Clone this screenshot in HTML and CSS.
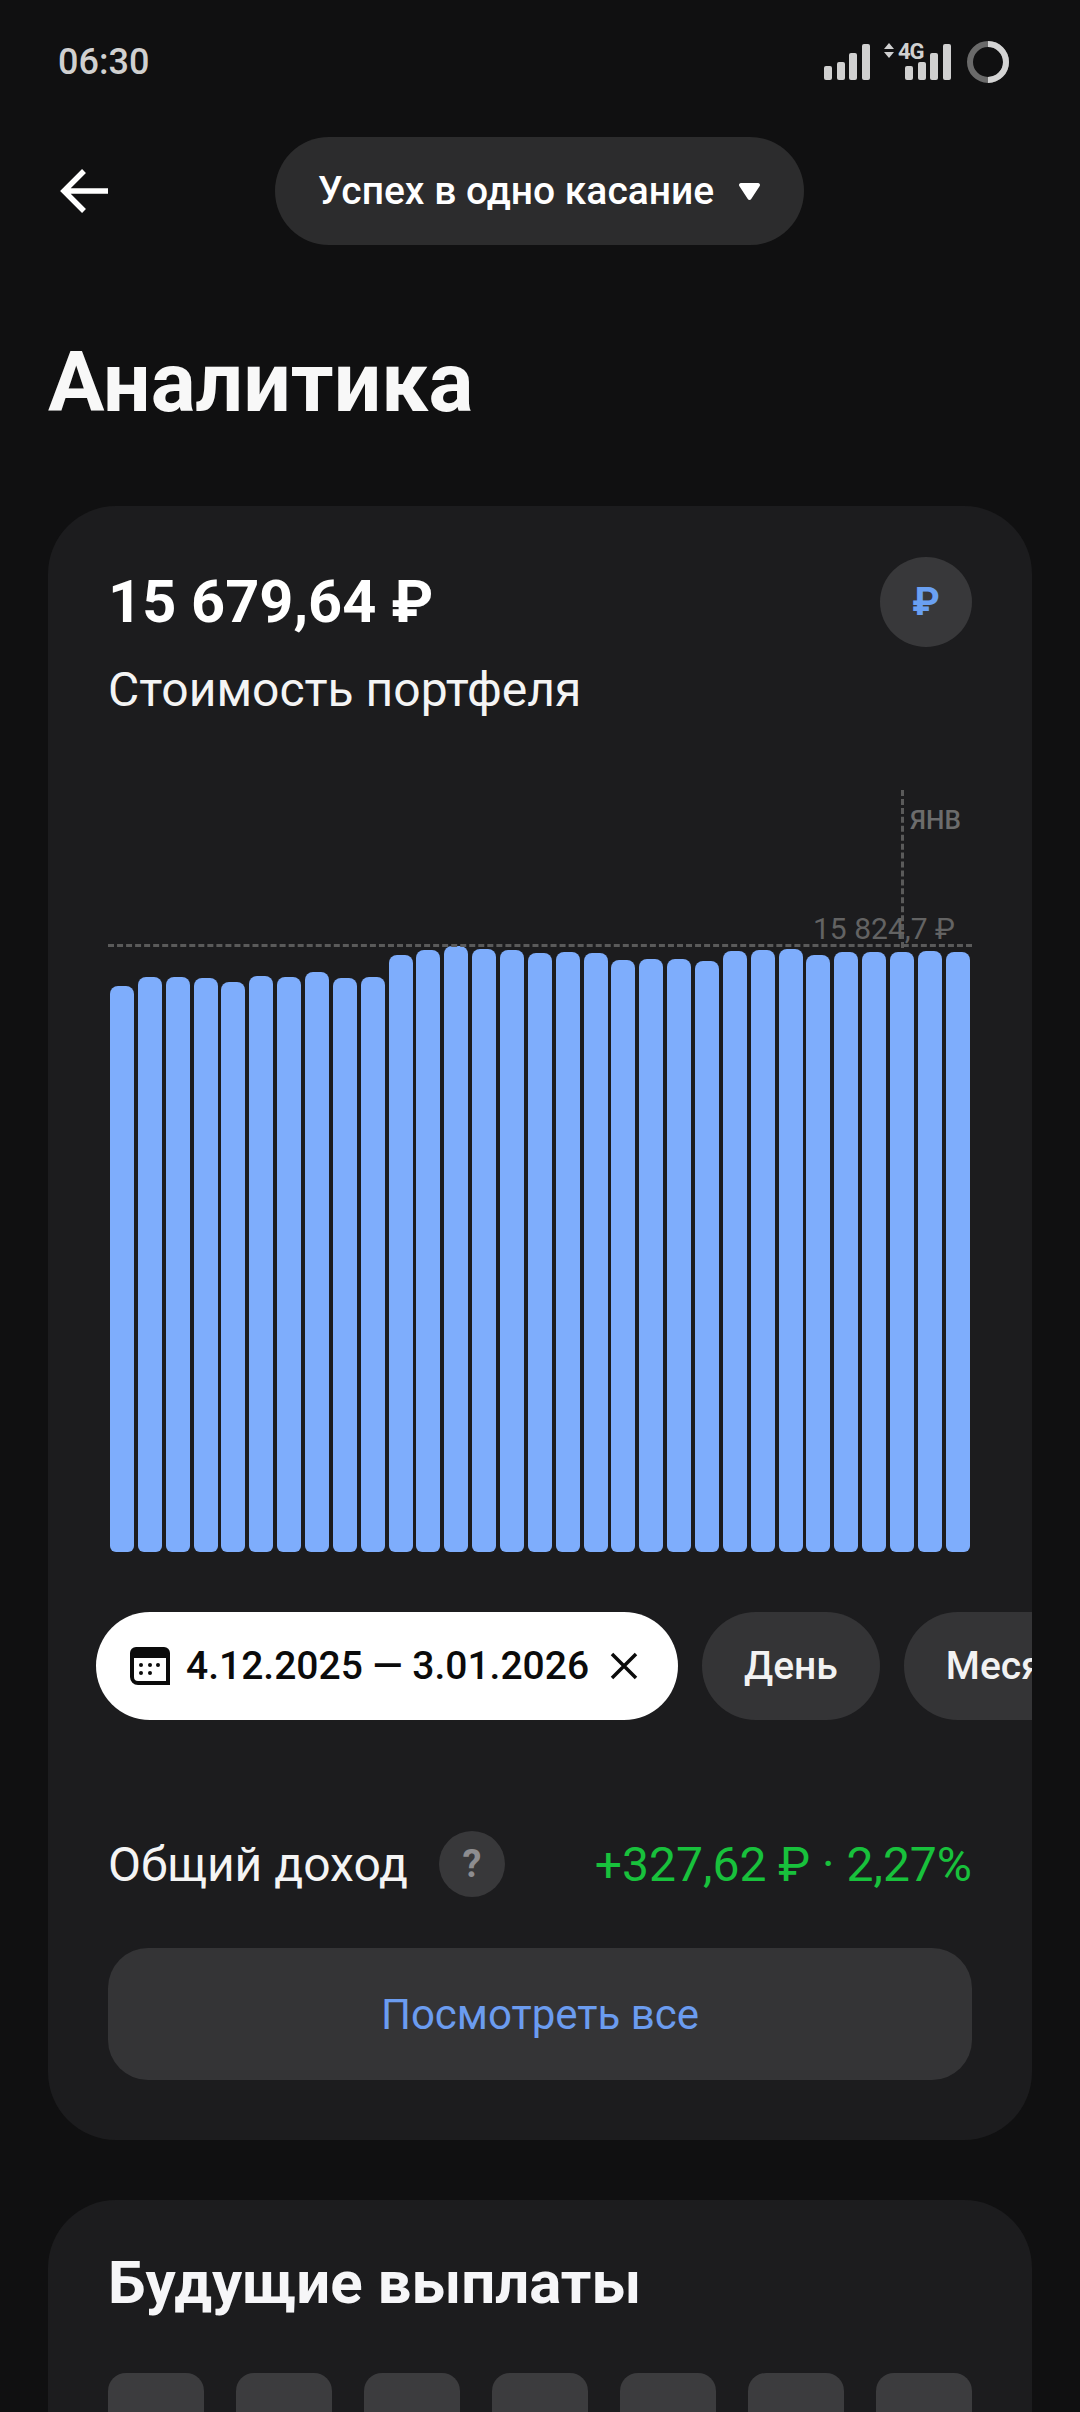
FILE: index.html
```html
<!DOCTYPE html>
<html lang="ru">
<head>
  <meta charset="UTF-8" />
  <title>Аналитика</title>
  <link rel="stylesheet" href="styles.css">
</head>
<body>
  <div class="status-bar">
    <span class="status-time">06:30</span>
    <svg class="status-icons" width="190" height="48" viewBox="824 38 190 48">
      <g fill="#d0d0d0">
        <rect x="824" y="66" width="8" height="14" rx="2"/>
        <rect x="837" y="62" width="8" height="18" rx="2"/>
        <rect x="849" y="53" width="8" height="27" rx="2"/>
        <rect x="862" y="44" width="8" height="36" rx="2"/>
        <path d="M889 43l5 6h-10zM889 58l5-6h-10z"/>
        <text x="898" y="59" class="status-4g">4G</text>
        <rect x="905" y="66" width="8" height="14" rx="2"/>
        <rect x="918" y="62" width="8" height="18" rx="2"/>
        <rect x="930" y="53" width="8" height="27" rx="2"/>
        <rect x="943" y="44" width="8" height="36" rx="2"/>
      </g>
      <circle cx="988" cy="62" r="18" fill="none" stroke="#6a6a6a" stroke-width="6"/>
      <path d="M988 44a18 18 0 0 1 0 36" fill="none" stroke="#d4d4d4" stroke-width="6"/>
    </svg>
  </div>

  <div class="nav">
    <svg class="back" width="52" height="48" viewBox="0 0 52 48">
      <path d="M49 24H6M25 4L5 24l20 20" fill="none" stroke="#fff" stroke-width="5.500"/>
    </svg>
    <div class="account-pill">
      <span>Успех в одно касание</span>
      <svg width="21" height="17" viewBox="0 0 21 17"><path d="M2 0h17a2 2 0 0 1 1.700 3l-8.500 13a2 2 0 0 1-3.400 0L.3 3A2 2 0 0 1 2 0z" fill="#fff"/></svg>
    </div>
  </div>

  <h1 class="page-title">Аналитика</h1>

  <section class="card">
    <div class="summary">
      <div>
        <div class="summary-value">15 679,64 ₽</div>
        <div class="summary-label">Стоимость портфеля</div>
      </div>
      <div class="currency-badge">₽</div>
    </div>

    <div class="chart">
      <div class="chart-month-line"></div>
      <span class="chart-month">ЯНВ</span>
      <span class="chart-max">15 824,7 ₽</span>
      <div class="chart-max-line"></div>
      <div class="bars">
        <div class="bar" style="height:566px"></div>
        <div class="bar" style="height:575px"></div>
        <div class="bar" style="height:575px"></div>
        <div class="bar" style="height:574px"></div>
        <div class="bar" style="height:570px"></div>
        <div class="bar" style="height:576px"></div>
        <div class="bar" style="height:575px"></div>
        <div class="bar" style="height:580px"></div>
        <div class="bar" style="height:574px"></div>
        <div class="bar" style="height:575px"></div>
        <div class="bar" style="height:597px"></div>
        <div class="bar" style="height:602px"></div>
        <div class="bar" style="height:606px"></div>
        <div class="bar" style="height:603px"></div>
        <div class="bar" style="height:602px"></div>
        <div class="bar" style="height:599px"></div>
        <div class="bar" style="height:600px"></div>
        <div class="bar" style="height:599px"></div>
        <div class="bar" style="height:592px"></div>
        <div class="bar" style="height:593px"></div>
        <div class="bar" style="height:593px"></div>
        <div class="bar" style="height:591px"></div>
        <div class="bar" style="height:601px"></div>
        <div class="bar" style="height:602px"></div>
        <div class="bar" style="height:603px"></div>
        <div class="bar" style="height:597px"></div>
        <div class="bar" style="height:600px"></div>
        <div class="bar" style="height:600px"></div>
        <div class="bar" style="height:600px"></div>
        <div class="bar" style="height:601px"></div>
        <div class="bar" style="height:600px"></div>
      </div>
    </div>

    <div class="chips">
      <div class="chip chip-active">
        <svg width="40" height="38" viewBox="0 0 40 38">
          <path d="M6 0h28a6 6 0 0 1 6 6v32H8a8 8 0 0 1-8-8V6a6 6 0 0 1 6-6zM4 11v19a4 4 0 0 0 4 4h28V11z" fill="#0b0b0b" fill-rule="evenodd"/>
          <circle cx="11" cy="18" r="2" fill="#0b0b0b"/>
          <circle cx="20" cy="18" r="2" fill="#0b0b0b"/>
          <circle cx="28" cy="18" r="2" fill="#0b0b0b"/>
          <circle cx="11" cy="26" r="2" fill="#0b0b0b"/>
          <circle cx="20" cy="26" r="2" fill="#0b0b0b"/>
        </svg>
        <span class="chip-date">4.12.2025 — 3.01.2026</span>
        <svg class="chip-close" width="28" height="28" viewBox="0 0 28 28">
          <path d="M2 2l24 24M26 2L2 26" fill="none" stroke="#0b0b0b" stroke-width="3.500"/>
        </svg>
      </div>
      <div class="chip">День</div>
      <div class="chip">Месяц</div>
    </div>

    <div class="income">
      <span class="income-label">Общий доход</span>
      <span class="help-badge">?</span>
      <span class="income-value">+327,62 ₽ · 2,27%</span>
    </div>

    <div class="show-all">Посмотреть все</div>
  </section>

  <section class="card card-payouts">
    <h2 class="card-title">Будущие выплаты</h2>
    <div class="skeletons">
      <div class="skeleton"></div>
      <div class="skeleton"></div>
      <div class="skeleton"></div>
      <div class="skeleton"></div>
      <div class="skeleton"></div>
      <div class="skeleton"></div>
      <div class="skeleton"></div>
    </div>
  </section>
</body>
</html>
```

FILE: styles.css
```css
html, body {
  margin: 0;
  padding: 0;
  height: 2412px;
  overflow: hidden;
  background-color: #101011;
  color: #fff;
  font-family: Roboto, "Noto Sans", sans-serif;
}
.status-bar {
  height: 124px;
  display: flex;
  align-items: center;
  justify-content: space-between;
  padding: 0 66px 0 58px;
  box-sizing: border-box;
}
.status-time {
  font-size: 36px;
  font-weight: 500;
  color: #d0d0d0;
}
.status-icons {
  display: block;
}
.status-4g {
  font-size: 22px;
  font-weight: 700;
  letter-spacing: -1px;
}
.nav {
  margin-top: 13px;
  height: 108px;
  display: flex;
  align-items: center;
  padding-left: 59px;
}
.back {
  flex: none;
}
.account-pill {
  margin-left: 164px;
  width: 529px;
  height: 108px;
  box-sizing: border-box;
  padding: 0 44px 0 43px;
  border-radius: 54px;
  background-color: #2c2c2d;
  display: flex;
  align-items: center;
  justify-content: space-between;
  font-size: 39px;
  font-weight: 500;
}
.page-title {
  margin: 90px 0 75px 48px;
  font-size: 84px;
  line-height: 96px;
  font-weight: 700;
  color: #f8f8f8;
}
.card {
  margin: 0 48px;
  padding: 51px 60px 60px;
  border-radius: 68px;
  background-color: #1c1c1e;
  overflow: hidden;
}
.summary {
  height: 182px;
  display: flex;
  justify-content: space-between;
  align-items: flex-start;
}
.summary-value {
  font-size: 59.500px;
  line-height: 84px;
  font-weight: 700;
  padding-top: 3px;
}
.summary-label {
  margin-top: 18px;
  font-size: 48px;
  line-height: 56px;
  color: #f4f4f4;
}
.currency-badge {
  width: 92px;
  height: 90px;
  border-radius: 50%;
  background-color: #38383a;
  color: #6aa0f2;
  font-size: 39px;
  font-weight: 700;
  display: flex;
  align-items: center;
  justify-content: center;
}
.chart {
  margin-top: 51px;
  height: 762px;
  position: relative;
}
.chart-month-line {
  position: absolute;
  left: 793px;
  top: 0;
  height: 158px;
  border-left: 3px dashed #5a5a5a;
}
.chart-month {
  position: absolute;
  left: 802px;
  top: 15px;
  font-size: 26px;
  line-height: 30px;
  font-weight: 500;
  color: #6c6c6c;
}
.chart-max {
  position: absolute;
  left: 705px;
  top: 121px;
  font-size: 30px;
  line-height: 36px;
  color: #636363;
}
.chart-max-line {
  position: absolute;
  left: 0;
  right: 0;
  top: 154px;
  border-top: 3px dashed #5a5a5a;
}
.bars {
  height: 100%;
  display: flex;
  align-items: flex-end;
  justify-content: space-between;
  padding: 0 2px;
}
.bar {
  width: 24px;
  border-radius: 8px 8px 6px 6px;
  background-color: #7eadfc;
}
.chips {
  margin: 60px 0 0 -12px;
  display: flex;
  gap: 24px;
}
.chip {
  flex: none;
  height: 108px;
  padding: 0 42px;
  border-radius: 54px;
  background-color: #343436;
  display: flex;
  align-items: center;
  font-size: 39px;
  font-weight: 500;
  color: #f2f2f2;
}
.chip-active {
  width: 582px;
  box-sizing: border-box;
  padding: 0 40px 0 34px;
  background-color: #fff;
  color: #0b0b0b;
  gap: 16px;
}
.chip-date {
  font-weight: 500;
}
.chip-close {
  margin-left: auto;
}
.income {
  margin-top: 111px;
  height: 66px;
  margin-bottom: 51px;
  display: flex;
  align-items: center;
}
.income-label {
  font-size: 48px;
  color: #f4f4f4;
}
.help-badge {
  margin-left: 31px;
  width: 66px;
  height: 66px;
  border-radius: 50%;
  background-color: #38383a;
  color: #8d8d90;
  font-size: 38px;
  font-weight: 700;
  display: flex;
  align-items: center;
  justify-content: center;
}
.income-value {
  margin-left: auto;
  font-size: 48px;
  color: #18c13c;
}
.show-all {
  height: 132px;
  border-radius: 40px;
  background-color: #343436;
  color: #6b9cf0;
  font-size: 42px;
  display: flex;
  align-items: center;
  justify-content: center;
}
.card-payouts {
  margin-top: 60px;
  padding-top: 47px;
}
.card-title {
  margin: 0;
  font-size: 60px;
  line-height: 72px;
  font-weight: 700;
  color: #f6f6f8;
}
.skeletons {
  margin-top: 54px;
  display: flex;
  justify-content: space-between;
}
.skeleton {
  width: 96px;
  height: 96px;
  border-radius: 18px;
  background-color: #3c3c3e;
}
```
